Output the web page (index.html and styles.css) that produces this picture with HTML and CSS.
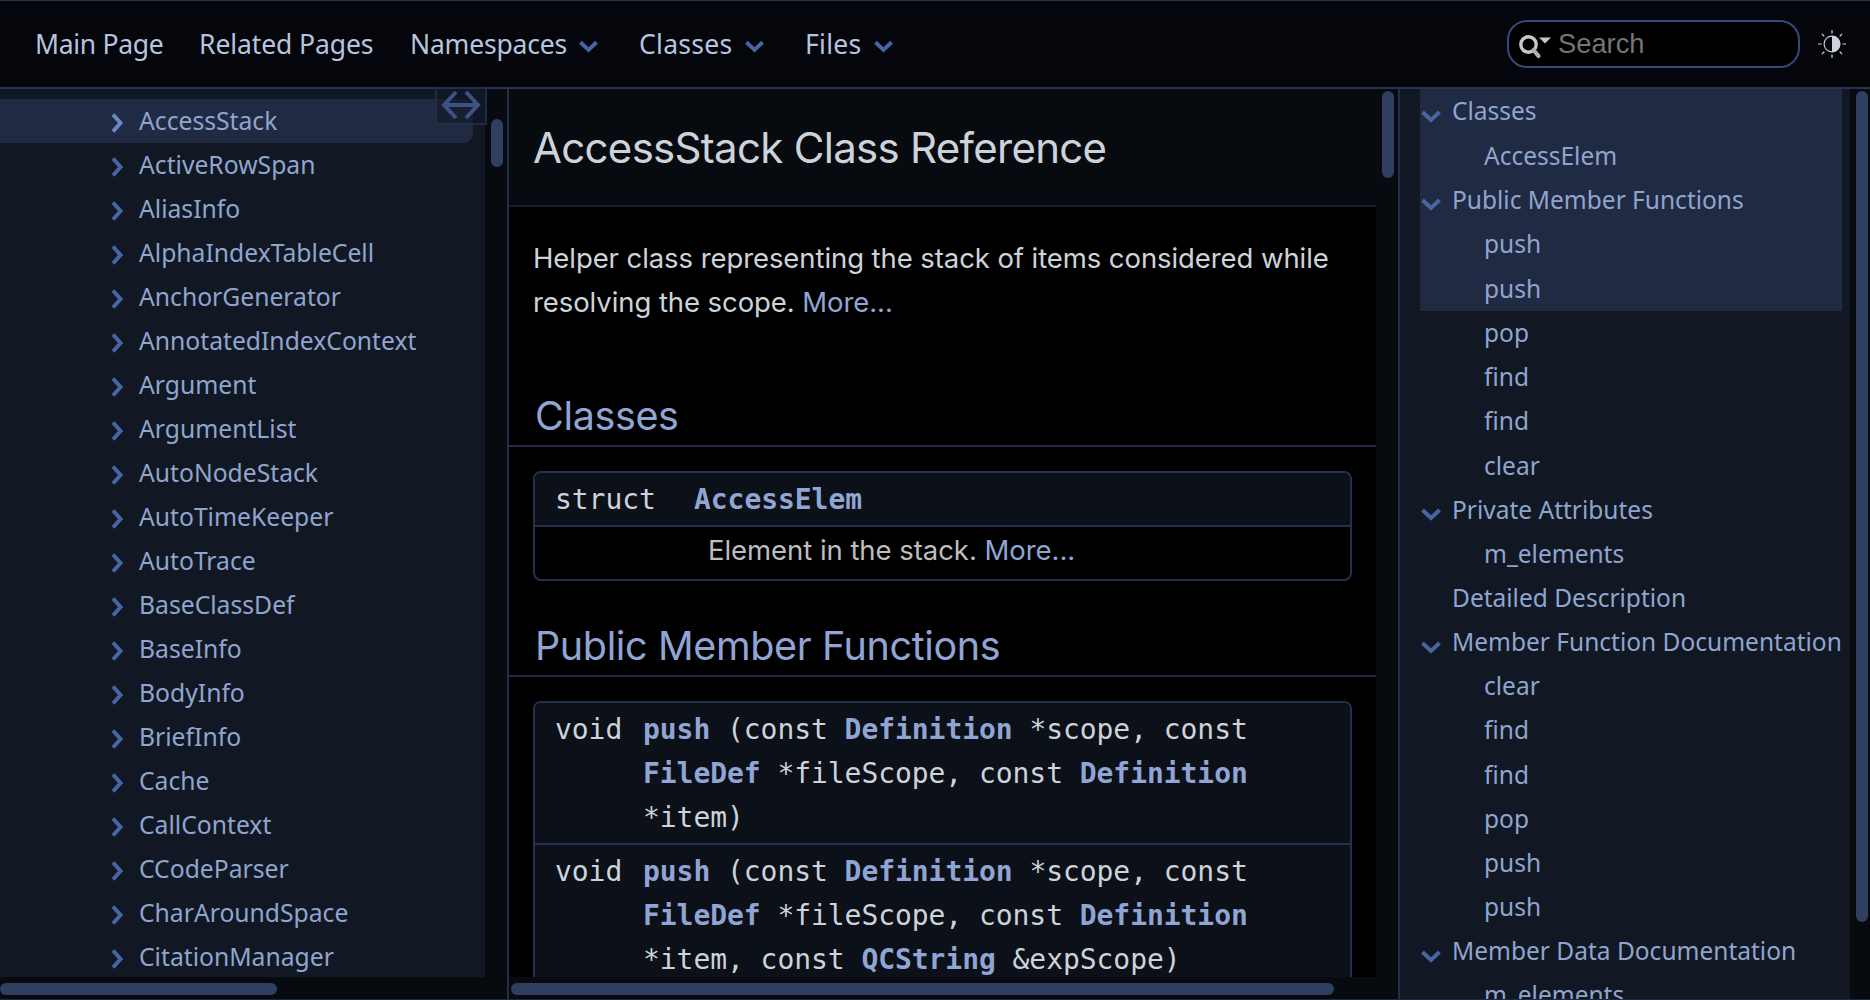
FILE: index.html
```html
<!DOCTYPE html>
<html lang="en">
<head>
<meta charset="utf-8">
<title>AccessStack Class Reference</title>
<link rel="stylesheet" href="styles.css">
</head>
<body>
<svg class="defs" width="0" height="0">
  <symbol id="right" viewBox="0 0 14 20"><path d="M2 1.5 9.5 10 2 18.5" fill="none" stroke="currentColor" stroke-width="4"/></symbol>
  <symbol id="down" viewBox="0 0 20 14"><path d="M1.5 2 10 10 18.500 2" fill="none" stroke="currentColor" stroke-width="4"/></symbol>
</svg>
<header class="topbar">
  <nav class="menu">
    <a class="m1">Main Page</a>
    <a class="m2">Related Pages</a>
    <a class="m3">Namespaces<svg><use href="#down"/></svg></a>
    <a class="m4">Classes<svg><use href="#down"/></svg></a>
    <a class="m5">Files<svg><use href="#down"/></svg></a>
  </nav>
  <div class="search">
    <svg class="mag" width="34" height="26" viewBox="0 0 34 26"><circle cx="10.500" cy="10.500" r="7.700" fill="none" stroke="#c8c8c8" stroke-width="3.400"/><path d="m15.500 16 5 6" stroke="#b0b0b0" stroke-width="4.200" stroke-linecap="round"/><path d="M21 3.500h12l-6 6z" fill="#c8c8c8"/></svg>
    <span>Search</span>
  </div>
  <svg class="theme" width="28" height="28" viewBox="0 0 28 28"><circle cx="14" cy="14" r="7.900" fill="none" stroke="#cdd3da" stroke-width="1.100"/><path d="M14 5.700a8.300 8.300 0 0 1 0 16.600z" fill="#cdd3da"/><path d="M14 0v3.500M14 24.500V28M0 14h3.500M24.500 14H28M4 4l2.300 2.300M21.700 21.700 24 24M4 24l2.300-2.300M21.700 6.300 24 4" stroke="#cdd3da" stroke-width="1.200"/></svg>
</header>
<div class="panes">
  <aside class="side">
    <div class="tree">
      <a class="row current"><svg><use href="#right"/></svg>AccessStack</a>
      <a class="row"><svg><use href="#right"/></svg>ActiveRowSpan</a>
      <a class="row"><svg><use href="#right"/></svg>AliasInfo</a>
      <a class="row"><svg><use href="#right"/></svg>AlphaIndexTableCell</a>
      <a class="row"><svg><use href="#right"/></svg>AnchorGenerator</a>
      <a class="row"><svg><use href="#right"/></svg>AnnotatedIndexContext</a>
      <a class="row"><svg><use href="#right"/></svg>Argument</a>
      <a class="row"><svg><use href="#right"/></svg>ArgumentList</a>
      <a class="row"><svg><use href="#right"/></svg>AutoNodeStack</a>
      <a class="row"><svg><use href="#right"/></svg>AutoTimeKeeper</a>
      <a class="row"><svg><use href="#right"/></svg>AutoTrace</a>
      <a class="row"><svg><use href="#right"/></svg>BaseClassDef</a>
      <a class="row"><svg><use href="#right"/></svg>BaseInfo</a>
      <a class="row"><svg><use href="#right"/></svg>BodyInfo</a>
      <a class="row"><svg><use href="#right"/></svg>BriefInfo</a>
      <a class="row"><svg><use href="#right"/></svg>Cache</a>
      <a class="row"><svg><use href="#right"/></svg>CallContext</a>
      <a class="row"><svg><use href="#right"/></svg>CCodeParser</a>
      <a class="row"><svg><use href="#right"/></svg>CharAroundSpace</a>
      <a class="row"><svg><use href="#right"/></svg>CitationManager</a>
    </div>
    <div class="vtrack"><i class="thumb"></i></div>
    <div class="htrack"><i class="thumb"></i></div>
    <div class="sync"><svg width="42" height="30" viewBox="0 0 42 30"><path d="M3 15h36M16 2 4 15l12 13M26 2l12 13-12 13" fill="none" stroke="#3c5284" stroke-width="4"/></svg></div>
  </aside>
  <main class="main">
    <div class="doc">
      <div class="titlebar"><h1>AccessStack Class Reference</h1></div>
      <p class="brief">Helper class representing the stack of items considered while<br>resolving the scope. <a>More...</a></p>
      <h2 class="first">Classes</h2>
      <div class="members">
        <div class="member"><span class="kind wide">struct</span><span class="sig"><a>AccessElem</a></span></div>
        <div class="desc">Element in the stack. <a>More...</a></div>
      </div>
      <h2 class="second">Public Member Functions</h2>
      <div class="members">
        <div class="member"><span class="kind">void</span><span class="sig"><a>push</a> (const <a>Definition</a> *scope, const<br><a>FileDef</a> *fileScope, const <a>Definition</a><br>*item)</span></div>
        <div class="member"><span class="kind">void</span><span class="sig"><a>push</a> (const <a>Definition</a> *scope, const<br><a>FileDef</a> *fileScope, const <a>Definition</a><br>*item, const <a>QCString</a> &amp;expScope)</span></div>
      </div>
    </div>
    <div class="vtrack"><i class="thumb"></i></div>
    <div class="htrack"><i class="thumb"></i></div>
  </main>
  <aside class="toc">
    <div class="toclist">
      <div class="visible">
        <a class="t0"><svg><use href="#down"/></svg>Classes</a>
        <a class="t1">AccessElem</a>
        <a class="t0"><svg><use href="#down"/></svg>Public Member Functions</a>
        <a class="t1">push</a>
        <a class="t1">push</a>
      </div>
      <a class="t1">pop</a>
      <a class="t1">find</a>
      <a class="t1">find</a>
      <a class="t1">clear</a>
      <a class="t0"><svg><use href="#down"/></svg>Private Attributes</a>
      <a class="t1">m_elements</a>
      <a class="t0 leaf">Detailed Description</a>
      <a class="t0"><svg><use href="#down"/></svg>Member Function Documentation</a>
      <a class="t1">clear</a>
      <a class="t1">find</a>
      <a class="t1">find</a>
      <a class="t1">pop</a>
      <a class="t1">push</a>
      <a class="t1">push</a>
      <a class="t0"><svg><use href="#down"/></svg>Member Data Documentation</a>
      <a class="t1">m_elements</a>
    </div>
    <div class="vtrack"><i class="thumb"></i></div>
  </aside>
</div>
</body>
</html>
```
FILE: styles.css
```css
* { box-sizing: border-box; }
body {
  margin: 0; width: 1870px; height: 1000px; overflow: hidden;
  display: flex; flex-direction: column;
  background: #000; color: #cdd3da;
  font-family: Inter, "Liberation Sans", sans-serif;
}
.defs { display: none; }
svg { flex: none; display: block; }

.topbar {
  flex: none; height: 89px; display: flex; align-items: center;
  padding: 0 24px 0 35px; background: #05060b;
  border-top: 1px solid #283551; border-bottom: 2px solid #263553;
}
.menu {
  flex: 1; display: flex;
  font: 26.5px/40px "Noto Sans", sans-serif; color: #b6c4df;
}
.menu a { display: flex; align-items: center; }
.menu svg { width: 19px; height: 14px; margin: 5px 0 0 12px; color: #4665a2; }
.m1 { width: 164px; letter-spacing: -.3px; }
.m2 { width: 211px; letter-spacing: -.1px; }
.m3 { width: 229px; letter-spacing: -.2px; }
.m4 { width: 166px; letter-spacing: .3px; }
.m5 { letter-spacing: .3px; }
.search {
  width: 293px; height: 48px; display: flex; align-items: center; gap: 6px;
  padding-left: 9px; margin-right: 18px;
  border: 2px solid #334a7a; border-radius: 20px; background: #000;
  font: 27.3px/40px "Liberation Sans", sans-serif; color: #757575;
}
.mag { margin-top: 5px; }
.search span { margin-top: -1px; }

.panes { flex: 1; min-height: 0; display: flex; border-bottom: 1px solid #1d2942; }
.side {
  position: relative; width: 509px; border-right: 2px solid #222f4b;
  display: grid; grid-template: 1fr 22px / 485px 22px;
  background: #070a0f;
}
.tree {
  overflow: hidden; padding-top: 10px; background: #111824;
  font: 24.7px/44px "Noto Sans", sans-serif; color: #90a5ce;
}
.row { display: flex; align-items: center; height: 44px; padding: 0 0 0 111px; }
.row svg { width: 14px; height: 20px; margin: 4px 14px 0 0; color: #4665a2; }
.current { width: 473px; background: #202a42; border-radius: 0 10px 10px 0; }
.current svg { color: #6c87c2; }
.sync {
  position: absolute; left: 435px; top: -2px; width: 52px; height: 38px;
  padding: 1px 0 0 3px; border: 2px solid rgba(38, 52, 80, .7);
  background: rgba(17, 24, 36, .6);
}
.thumb { background: #2f3f62; border-radius: 6px; }
.vtrack, .htrack { display: flex; background: #070a0f; }
.vtrack .thumb { width: 12px; margin-left: 6px; }
.htrack .thumb { height: 12px; margin-top: 6px; }
.side .vtrack .thumb { height: 48px; margin-top: 30px; }
.side .htrack .thumb { width: 277px; }
.htrack { grid-column: 1 / 3; }

.main {
  width: 891px; display: grid; grid-template: 1fr 22px / 867px 22px;
  border-right: 2px solid #222f4b;
}
.main .vtrack .thumb { height: 87px; margin-top: 2px; }
.main .htrack .thumb { width: 823px; margin-left: 2px; }
.doc { overflow: hidden; }
.doc a { color: #90a5d3; }
.titlebar {
  height: 118px; display: flex; align-items: center; padding: 0 24px;
  background: #070a0f; border-bottom: 2px solid #151e2e;
}
h1 { margin: 2px 0 0; font-size: 42px; line-height: 50px; font-weight: 400; letter-spacing: -.7px; }
.brief { margin: 29px 0 0 24px; font-size: 27.5px; line-height: 44px; white-space: nowrap; letter-spacing: -.08px; }
h2 {
  margin: 0; height: 60px; padding-left: 26px; border-bottom: 2px solid #202b43;
  font-size: 39.5px; line-height: 59px; font-weight: 400; letter-spacing: -.37px; color: #90a5d3;
}
.first { margin-top: 63px; }
.second { margin-top: 36px; }
.members {
  width: 819px; margin: 24px 0 0 24px; overflow: hidden;
  border: 2px solid #24314d; border-radius: 8px;
}
.member {
  display: flex; padding: 5px 0 3px 20px; background: #0c1018;
  font: 28px/44px "DejaVu Sans Mono", monospace; letter-spacing: -.06px; white-space: nowrap;
}
.member + * { border-top: 2px solid #24314d; }
.kind { width: 88px; }
.wide { width: 139px; }
.member a { font-weight: 700; }
.desc { height: 54px; padding: 1px 0 0 173px; font-size: 27.5px; line-height: 44px; letter-spacing: -.05px; color: #bebebe; }

.toc { flex: 1; display: flex; background: #070a0f; }
.toclist {
  width: 450px; padding-left: 20px; overflow: hidden; background: #111824;
  font: 24.5px/44px "Noto Sans", sans-serif; color: #90a5ce; white-space: nowrap;
}
.visible { width: 422px; background: #202a42; }
.t0, .t1 { display: flex; align-items: center; height: 44.16px; }
.visible > a { height: 44.4px; }
.t0 svg { width: 20px; height: 14px; margin: 11px 11px 0 1px; color: #4665a2; }
.t1 { padding-left: 64px; }
.leaf { padding-left: 32px; }
.toc .vtrack .thumb { height: 831px; margin-top: 2px; }
```
